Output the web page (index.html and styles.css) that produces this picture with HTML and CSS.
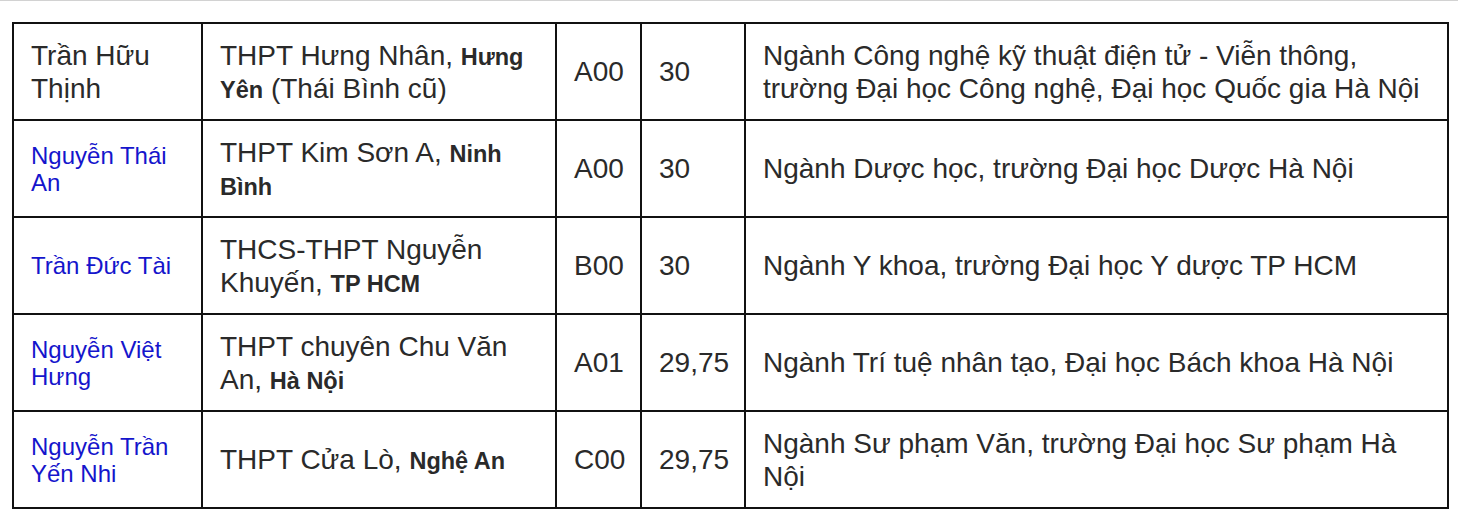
FILE: index.html
```html
<!DOCTYPE html>
<html lang="vi">
<head>
<meta charset="utf-8">
<title>Bảng điểm</title>
<link rel="stylesheet" href="styles.css">
</head>
<body>
<div class="page">
  <table class="scores">
    <colgroup>
      <col class="c-name">
      <col class="c-school">
      <col class="c-block">
      <col class="c-score">
      <col class="c-major">
    </colgroup>
    <tbody>
      <tr>
        <td class="name plain">Trần Hữu Thịnh</td>
        <td>THPT Hưng Nhân, <b>Hưng Yên</b> (Thái Bình cũ)</td>
        <td>A00</td>
        <td>30</td>
        <td>Ngành Công nghệ kỹ thuật điện tử - Viễn thông, trường Đại học Công nghệ, Đại học Quốc gia Hà Nội</td>
      </tr>
      <tr>
        <td class="name link">Nguyễn Thái An</td>
        <td>THPT Kim Sơn A, <b>Ninh Bình</b></td>
        <td>A00</td>
        <td>30</td>
        <td>Ngành Dược học, trường Đại học Dược Hà Nội</td>
      </tr>
      <tr>
        <td class="name link">Trần Đức Tài</td>
        <td>THCS-THPT Nguyễn Khuyến, <b>TP HCM</b></td>
        <td>B00</td>
        <td>30</td>
        <td>Ngành Y khoa, trường Đại học Y dược TP HCM</td>
      </tr>
      <tr>
        <td class="name link">Nguyễn Việt Hưng</td>
        <td>THPT chuyên Chu Văn An, <b>Hà Nội</b></td>
        <td>A01</td>
        <td>29,75</td>
        <td>Ngành Trí tuệ nhân tạo, Đại học Bách khoa Hà Nội</td>
      </tr>
      <tr>
        <td class="name link">Nguyễn Trần Yến Nhi</td>
        <td>THPT Cửa Lò, <b>Nghệ An</b></td>
        <td>C00</td>
        <td>29,75</td>
        <td>Ngành Sư phạm Văn, trường Đại học Sư phạm Hà Nội</td>
      </tr>
    </tbody>
  </table>
</div>
</body>
</html>
```
FILE: styles.css
```css
html, body {
  margin: 0;
  padding: 0;
  background: #fff;
}

.page {
  border-top: 1px solid #d2d2d2;
  padding: 21px 10px 0 12px;
  font-family: "Liberation Sans", Arial, sans-serif;
  color: #2a2a2a;
}

.scores {
  border-collapse: collapse;
  table-layout: fixed;
  width: 1435px;
}

.c-name { width: 189px; }
.c-school { width: 354px; }
.c-block { width: 85px; }
.c-score { width: 104px; }
.c-major { width: 703px; }

.scores td {
  border: 2px solid #111;
  padding: 14.5px 14px 14.5px 17px;
  font-size: 28px;
  line-height: 33px;
  vertical-align: middle;
  text-align: left;
}

.scores td b {
  font-size: 23.5px;
  line-height: 20px;
  font-weight: bold;
}

.scores td.link {
  color: #1515cc;
  font-size: 24px;
  line-height: 27px;
}
```
